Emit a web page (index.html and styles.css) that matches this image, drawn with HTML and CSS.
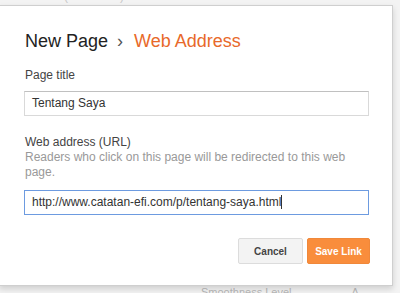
FILE: index.html
```html
<!DOCTYPE html>
<html>
<head>
    <title>New Page - Web Address</title>
    <link rel="stylesheet" href="styles.css">
</head>
<body>
    <div class="backdrop">
        <div class="back-top">Indonesian (Indonesia)</div>
        <div class="back-bottom">
            <span class="back-label">Smoothness Level</span>
            <span class="back-a">A</span>
        </div>
    </div>

    <div class="dialog">
        <h1 class="dialog-title">
            <span>New Page</span><span class="sep">&rsaquo;</span><span class="step">Web Address</span>
        </h1>

        <div class="field">
            <label class="field-label">Page title</label>
            <div class="input">Tentang Saya</div>
        </div>

        <div class="field field-url">
            <label class="field-label">Web address (URL)</label>
            <p class="field-help">Readers who click on this page will be redirected to this web page.</p>
            <div class="input input-focus">http://www.catatan-efi.com/p/tentang-saya.html<span class="caret"></span></div>
        </div>

        <div class="actions">
            <button class="btn btn-cancel">Cancel</button>
            <button class="btn btn-save">Save Link</button>
        </div>
    </div>
</body>
</html>
```

FILE: styles.css
```css
body {
    margin: 0;
    font-family: "Liberation Sans", Arial, sans-serif;
    background-color: #f3f3f3;
    overflow: hidden;
}
.backdrop {
    height: 293px;
    display: flex;
    flex-direction: column;
    justify-content: space-between;
    color: #b8b8b8;
}
.back-top {
    font-size: 12px;
    line-height: 12px;
    margin-top: -10px;
    padding-left: 2px;
    color: #c8c8c8;
}
.back-bottom {
    display: flex;
    font-size: 11px;
    line-height: 14px;
    margin-bottom: -6px;
    padding-left: 201px;
}
.back-a {
    margin-left: 60px;
}
.dialog {
    position: absolute;
    top: 5px;
    left: -1px;
    width: 394px;
    box-sizing: border-box;
    padding: 24px 23px 21px 24px;
    background: white;
    border: 1px solid #cfcfcf;
    box-shadow: 0 3px 6px rgba(0,0,0,0.15);
}
.dialog-title {
    margin: 0;
    font-size: 18px;
    line-height: 22px;
    font-weight: normal;
    color: #222;
    padding-left: 1px;
}
.sep {
    color: #555;
    margin: 0 11px 0 9px;
}
.step { color: #e8692a; }
.field {
    margin-top: 15px;
}
.field-url {
    margin-top: 18px;
}
.field-label {
    display: block;
    font-size: 12px;
    line-height: 16px;
    color: #444;
    padding-left: 1px;
}
.field-help {
    margin: 0;
    font-size: 12px;
    line-height: 15px;
    color: #999;
    padding-left: 1px;
}
.input {
    box-sizing: border-box;
    height: 25px;
    margin-top: 8px;
    padding: 0 7px;
    border: 1px solid #d9d9d9;
    border-top-color: #c0c0c0;
    font-size: 12px;
    line-height: 23px;
    color: #333;
}
.input-focus {
    margin-top: 10px;
    border-color: #6d9be0;
}
.caret {
    display: inline-block;
    width: 1px;
    height: 14px;
    background: #333;
    vertical-align: -3px;
}
.actions {
    display: flex;
    justify-content: flex-end;
    gap: 4px;
    margin-top: 23px;
    margin-right: -1px;
}
.btn {
    height: 26px;
    border-radius: 2px;
    font-family: "Liberation Sans", Arial, sans-serif;
    font-size: 10px;
    font-weight: bold;
    padding: 0;
}
.btn-cancel {
    width: 65px;
    background: #f3f3f3;
    border: 1px solid #dcdcdc;
    color: #444;
}
.btn-save {
    width: 63px;
    background: #f98d3c;
    border: 1px solid #f0883a;
    color: white;
}
```
